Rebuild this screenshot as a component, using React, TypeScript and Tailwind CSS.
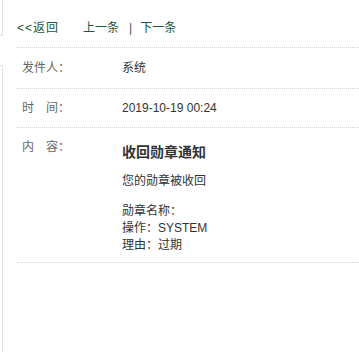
import React from 'react';

const font = { fontFamily: '"Liberation Sans", "Noto Sans CJK SC", sans-serif' };

function InfoRow({ label, children, className }: { label: string; children: React.ReactNode; className?: string }) {
  return (
    <div className={`flex border-b border-dotted border-[#d6d6d6] ${className ?? ''}`}>
      <div className="w-[105px] shrink-0 pl-[5px] text-[#666]">{label}</div>
      <div className="flex-1 text-[#333]">{children}</div>
    </div>
  );
}

export default function App() {
  return (
    <div className="flex h-screen w-full bg-white text-[12px]" style={font}>
      {/* sidebar edge */}
      <div className="flex w-[3px] shrink-0 flex-col">
        <div className="h-[36px] border-r border-b border-[#dde6dd]"></div>
        <div className="mt-[29px] flex-1 border-r border-t border-[#dde6dd]"></div>
      </div>

      <div className="ml-[14px] flex-1">
        {/* nav */}
        <div className="box-border flex h-[48px] items-start border-b border-dotted border-[#d6d6d6] pt-[22px] leading-[12px] text-[#21573a]">
          <span className="tracking-[1px]">&lt;&lt;返回</span>
          <span className="ml-[24px]">上一条</span>
          <span className="ml-[10px] text-[#555]">|</span>
          <span className="ml-[8px]">下一条</span>
        </div>

        <InfoRow label="发件人：" className="box-border h-[41px] items-center">
          系统
        </InfoRow>

        <InfoRow label="时　间：" className="box-border h-[39px] items-center">
          2019-10-19 00:24
        </InfoRow>

        <div className="box-border flex h-[135px] border-b border-dotted border-[#d6d6d6]">
          <div className="w-[105px] shrink-0 pl-[5px] pt-[9px] leading-[20px] text-[#666]">内　容：</div>
          <div className="flex-1 pt-[14px] text-[#333]">
            <div className="text-[14px] font-bold leading-[20px]">收回勋章通知</div>
            <div className="mt-[11px] leading-[17px]">您的勋章被收回</div>
            <div className="mt-[13px] leading-[17px]">
              <div>勋章名称：</div>
              <div>操作：SYSTEM</div>
              <div>理由：过期</div>
            </div>
          </div>
        </div>
      </div>
    </div>
  );
}
